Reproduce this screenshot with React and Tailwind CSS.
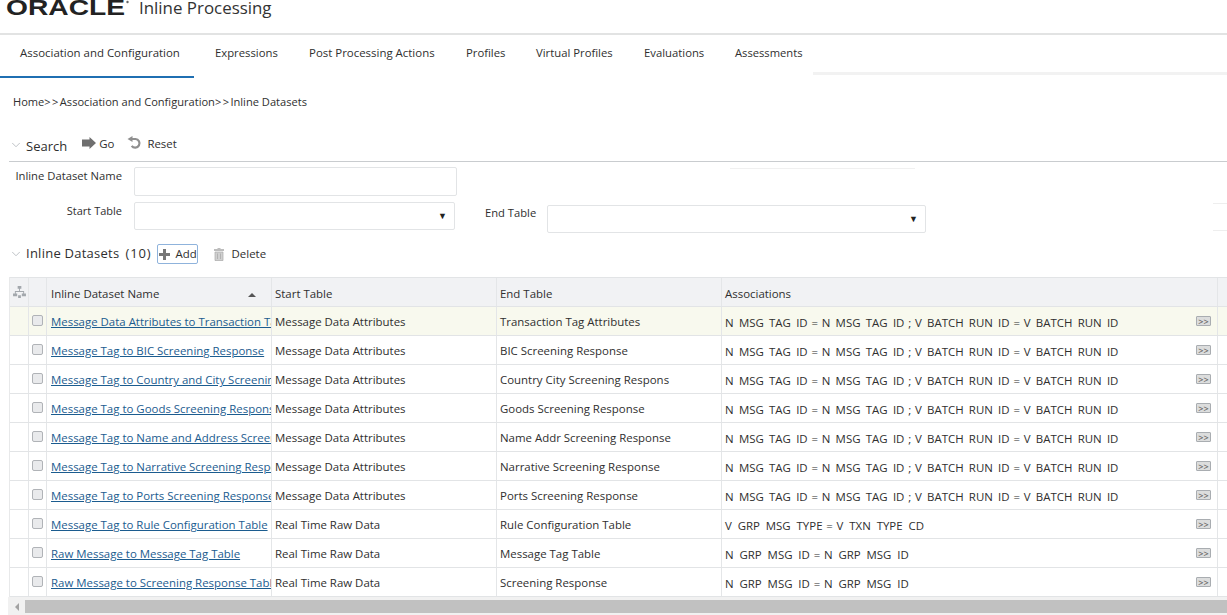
import React from "react";
import { ChevronDown } from "lucide-react";

const rows = [
  ["Message Data Attributes to Transaction Tag Attributes", "Message Data Attributes", "Transaction Tag Attributes", 0],
  ["Message Tag to BIC Screening Response", "Message Data Attributes", "BIC Screening Response", 0],
  ["Message Tag to Country and City Screening Response", "Message Data Attributes", "Country City Screening Respons", 0],
  ["Message Tag to Goods Screening Response", "Message Data Attributes", "Goods Screening Response", 0],
  ["Message Tag to Name and Address Screening", "Message Data Attributes", "Name Addr Screening Response", 0],
  ["Message Tag to Narrative Screening Response", "Message Data Attributes", "Narrative Screening Response", 0],
  ["Message Tag to Ports Screening Response", "Message Data Attributes", "Ports Screening Response", 0],
  ["Message Tag to Rule Configuration Table", "Real Time Raw Data", "Rule Configuration Table", 1],
  ["Raw Message to Message Tag Table", "Real Time Raw Data", "Message Tag Table", 2],
  ["Raw Message to Screening Response Table", "Real Time Raw Data", "Screening Response", 2],
];
const assoc = [
  ["N MSG TAG ID = N MSG TAG ID ; V BATCH RUN ID = V BATCH RUN ID", "[word-spacing:2.3px]"],
  ["V GRP MSG TYPE = V TXN TYPE CD", "[word-spacing:2.9px]"],
  ["N GRP MSG ID = N GRP MSG ID", "[word-spacing:2.9px]"],
];
const tabs = [
  ["Association and Configuration", "w-[194px] pl-5 text-[11.45px]"],
  ["Expressions", "w-[115px] pl-[21px] text-[11.3px]"],
  ["Post Processing Actions", "w-[157px] text-[11.45px]"],
  ["Profiles", "w-[70px] text-[11.3px]"],
  ["Virtual Profiles", "w-[108px] text-[11.3px]"],
  ["Evaluations", "w-[91px] text-[11.3px]"],
  ["Assessments", "w-[78px] text-[11.2px]"],
];
const grid = "grid grid-cols-[19px_18px_225px_225px_225px_496px_10px]";
const cell = "border-r border-[#e4e6e8] flex items-center overflow-hidden whitespace-nowrap";

const Chevron = () => <ChevronDown className="w-[14px] h-[14px] text-[#b0b5ba]" strokeWidth={1.4} />;

export default function App() {
  return (
    <div className="w-[1227px] h-[615px] overflow-hidden bg-white text-[#2f2f2f] text-[11.45px] font-['Open_Sans',sans-serif]">
      <header className="h-[35px] border-b-2 border-[#e2e3e3] flex items-start pl-[6px] overflow-hidden">
        <svg width="124" height="17" viewBox="0 0 124 17" className="-mt-[1px] shrink-0">
          <text x="0" y="16" textLength="119" lengthAdjust="spacingAndGlyphs" fontFamily="Liberation Sans" fontWeight="700" fontSize="22" fill="#222">ORACLE</text>
          <circle cx="121.5" cy="3" r="1.2" fill="#666" />
        </svg>
        <span className="ml-[9px] -mt-[4px] text-[16.9px] leading-[24px] text-[#333]">Inline Processing</span>
      </header>

      <nav className="flex h-[43px]">
        {tabs.map(([t, c], i) => (
          <div key={t} className={`${c} h-full leading-[18px] pt-[9px] ${i === 0 ? "border-b-2 border-[#1f6fb2]" : ""}`}>{t}</div>
        ))}
        <div className="flex-1 h-[40px] border-b-[3px] border-[#f2f2f2]" />
      </nav>

      <div className="pl-[13px] mt-[15px] h-[18px] leading-[18px] text-[11.1px] whitespace-nowrap">
        Home<span className="tracking-[1.4px]">&gt;&gt;</span>Association and Configuration<span className="tracking-[1.4px]">&gt;&gt;</span>Inline Datasets
      </div>

      <section className="mt-[25px] ml-[9px] h-[26px] border-b border-[#c9cccf] flex items-start">
        <div className="mt-[2px]"><Chevron /></div>
        <span className="ml-[3px] text-[13px] leading-[20px]">Search</span>
        <svg width="14" height="12" viewBox="0 0 14 12" className="ml-[15px] mt-[1px]">
          <path d="M0 2.5h7.5V0L14 6l-6.5 6V9.5H0z" fill="#6f6f6f" />
        </svg>
        <span className="ml-[3px] leading-[18px] -mt-[1px]">Go</span>
        <svg width="15" height="14" viewBox="0 0 15 14" className="ml-[13px]" fill="none">
          <path d="M4 3h4.5a4.3 4.3 0 1 1-3.8 6.8" stroke="#8f8f8f" strokeWidth="2.2" />
          <path d="M0.5 3 5.5 0v6z" fill="#8f8f8f" />
        </svg>
        <span className="ml-[5px] leading-[18px] -mt-[1px]">Reset</span>
      </section>

      <div className="flex mt-[5px] h-[29px]">
        <label className="w-[122px] text-right leading-[18px] text-[11.25px]">Inline Dataset Name</label>
        <div className="ml-[12px] w-[323px] h-[29px] border border-[#e2e4e6] rounded-[2px]" />
        <div className="ml-[273px] mt-[1px] w-[185px] h-px bg-[#f0f0f0]" />
      </div>

      <div className="flex mt-[6px] h-[31px]">
        <label className="w-[122px] text-right leading-[18px] text-[11px]">Start Table</label>
        <div className="ml-[12px] w-[321px] h-[28px] border border-[#e2e4e6] rounded-[2px] flex items-center justify-end pr-[7px] text-[9px] text-[#222]">▼</div>
        <label className="ml-[30px] w-[51px] leading-[18px] whitespace-nowrap text-[11.2px] mt-[2px]">End Table</label>
        <div className="ml-[11px] mt-[3px] w-[379px] h-[28px] border border-[#e2e4e6] rounded-[2px] flex items-center justify-end pr-[7px] text-[9px] text-[#222]">▼</div>
        <div className="ml-[287px] mt-[1px] flex-1 h-[28px] border-y border-[#eeeeee]" />
      </div>

      <section className="ml-[9px] mt-[10px] h-[21px] flex items-center">
        <Chevron />
        <span className="ml-[3px] text-[13px] tracking-[0.25px]">Inline Datasets</span>
        <span className="ml-[6px] text-[13px] tracking-[0.9px]">(10)</span>
        <div className="ml-[5px] mt-[1px] w-[41px] h-[20px] border border-[#8fb3dc] rounded-[2px] flex items-center whitespace-nowrap">
          <svg width="13" height="13" viewBox="0 0 13 13" className="shrink-0"><path d="M5 1h3v4h4v3H8v4H5V8H1V5h4z" fill="#777" /></svg>
          <span className="ml-[5px] leading-none">Add</span>
        </div>
        <svg width="12" height="14" viewBox="0 0 12 14" className="ml-[15px]">
          <path d="M4.5 1h3v1h3.5v2H1V2h3.5z" fill="#bdbdbd" />
          <path d="M2 5h8v8.5H2z" fill="#d0d0d0" stroke="#a9a9a9" strokeWidth=".7" />
          <path d="M4.5 6.5v5.5M7.5 6.5v5.5" stroke="#a9a9a9" strokeWidth=".8" />
        </svg>
        <span className="ml-[7px]">Delete</span>
      </section>

      <div className="ml-[9px] mt-[13px] border-l border-[#e8e9ea]">
        <div className={`${grid} h-[30px] bg-[#f1f2f4] border-y border-[#e2e4e6]`}>
          <div className={`${cell} justify-center`}>
            <svg width="13" height="12" viewBox="0 0 14 13" fill="#a3a8ad">
              <path d="M5 0h4v3H5zM6.5 3h1v3h-1zM2 5.5h10v1H2zM2 5.5h1V8H2zM11 5.5h1V8h-1zM0 8h4.5v3H0zM9.5 8H14v3H9.5zM5.5 10h3v3h-3z" />
            </svg>
          </div>
          <div className={cell} />
          <div className={`${cell} pl-[4px] pt-[3px] relative`}>
            Inline Dataset Name
            <span className="absolute left-[201px] top-[15px] w-0 h-0 border-x-[4px] border-x-transparent border-b-[4px] border-b-[#555]" />
          </div>
          <div className={`${cell} pl-[3px] pt-[3px]`}>Start Table</div>
          <div className={`${cell} pl-[3px] pt-[3px]`}>End Table</div>
          <div className={`${cell} pl-[3px] pt-[3px]`}>Associations</div>
          <div />
        </div>
        {rows.map(([name, start, end, a], i) => (
          <div key={name} className={`${grid} h-[29px] border-b border-[#e2e4e6] ${i === 0 ? "bg-[#f8f9ee]" : "bg-white"}`}>
            <div className={cell} />
            <div className={`${cell} justify-center pb-[1px]`}>
              <span className="w-[11px] h-[11px] rounded-[2px] border border-[#b0b3b7] bg-[#e9eaec]" />
            </div>
            <div className={`${cell} pl-[4px] pt-[2px]`}>
              <a className="text-[#1b5c8f] underline">{name}</a>
            </div>
            <div className={`${cell} pl-[3px] pt-[2px]`}>{start}</div>
            <div className={`${cell} pl-[3px] pt-[2px]`}>{end}</div>
            <div className={`${cell} pl-[3px] justify-between`}>
              <span className={`mt-[3px] ${assoc[a][1]}`}>
                {assoc[a][0].split(/( [=;] )/).map((part, k) =>
                  k % 2 ? <span key={k} className="[word-spacing:0.8px]">{part}</span> : <span key={k}>{part}</span>
                )}
              </span>
              <span className="mr-[6px] w-[15px] h-[10px] rounded-[1px] border border-[#a9adb1] bg-[#dcdddd] flex items-center justify-center text-[9px] leading-none font-semibold text-[#666]">&gt;&gt;</span>
            </div>
            <div />
          </div>
        ))}
      </div>

      <div className="ml-[8px] h-[18px] pt-[3px] pb-[2px] bg-[#f1f1f1] flex items-stretch">
        <div className="w-[17px] flex items-center justify-center">
          <span className="w-0 h-0 border-y-[4px] border-y-transparent border-r-[4px] border-r-[#a3a3a3]" />
        </div>
        <div className="flex-1 bg-[#c1c1c1]" />
      </div>
    </div>
  );
}
